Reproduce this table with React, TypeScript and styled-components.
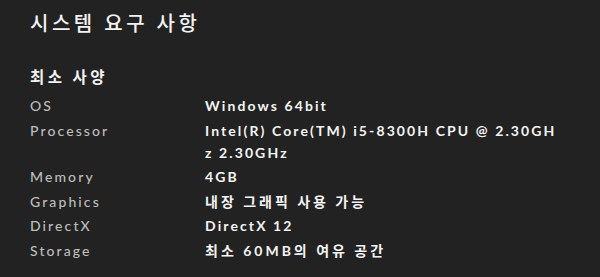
import React from 'react'
import styled, { createGlobalStyle } from 'styled-components'

const GlobalStyle = createGlobalStyle`
  html, body {
    margin: 0;
    padding: 0;
    background: #222222;
  }
`

const specs = [
  { label: 'OS', value: 'Windows 64bit' },
  { label: 'Processor', value: 'Intel(R) Core(TM) i5-8300H CPU @ 2.30GHz 2.30GHz' },
  { label: 'Memory', value: '4GB' },
  { label: 'Graphics', value: '내장 그래픽 사용 가능' },
  { label: 'DirectX', value: 'DirectX 12' },
  { label: 'Storage', value: '최소 60MB의 여유 공간' }
]

const hasHangul = (text: string) => /[\uac00-\ud7a3]/.test(text)

const Panel = styled.section`
  box-sizing: border-box;
  width: 600px;
  height: 277px;
  padding: 10px 30px 0 30px;
  background: #222222;
  border-radius: 0 10px 10px 0;
  font-family: Lato, "Noto Sans CJK KR", sans-serif;
  overflow: hidden;
`

const Title = styled.h2`
  margin: 0;
  font-size: 20px;
  font-weight: 500;
  letter-spacing: 3.5px;
  line-height: 26px;
  color: #f2f2f2;
`

const SubTitle = styled.h3`
  margin: 31px 0 8px 0;
  font-size: 15.5px;
  font-weight: 700;
  letter-spacing: 3.4px;
  line-height: 20px;
  color: #f2f2f2;
`

const SpecList = styled.dl`
  margin: 0;
  display: grid;
  grid-template-columns: 175px 356px;
  row-gap: 2.6px;
  font-size: 14px;
  line-height: 22px;
  letter-spacing: 2.1px;
`

const Label = styled.dt`
  color: #bdbdbd;
  font-weight: 500;
`

const Value = styled.dd<{ $hangul?: boolean }>`
  margin: 0;
  color: #f4f4f4;
  font-weight: 700;
  word-break: break-all;
  letter-spacing: ${p => (p.$hangul ? '3px' : '2.1px')};
`

export default function App() {
  return (
    <>
      <GlobalStyle />
      <Panel>
        <Title>시스템 요구 사항</Title>
        <SubTitle>최소 사양</SubTitle>
        <SpecList>
          {specs.map(item => (
            <React.Fragment key={item.label}>
              <Label>{item.label}</Label>
              <Value $hangul={hasHangul(item.value)}>{item.value}</Value>
            </React.Fragment>
          ))}
        </SpecList>
      </Panel>
    </>
  )
}
